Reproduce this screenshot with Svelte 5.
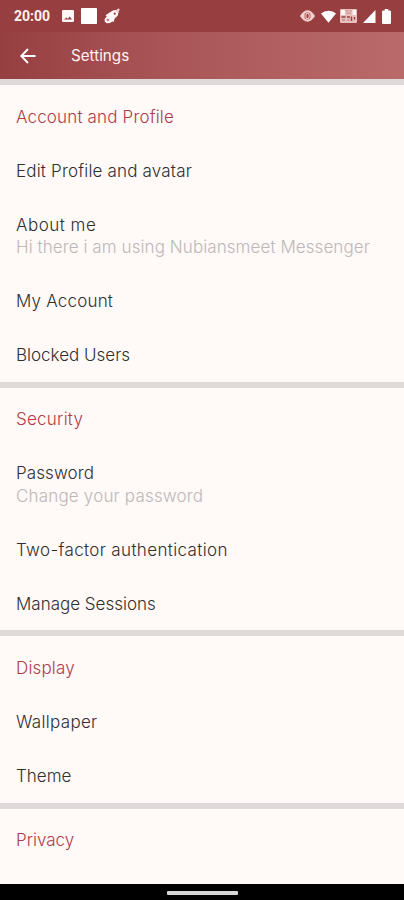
<script lang="ts">
  type Item = { label: string; detail?: string; spacing?: number; detailSpacing?: number };
  type Section = { title: string; spacing?: number; items: Item[] };

  const sections: Section[] = [
    {
      title: "Account and Profile",
      spacing: 0.16,
      items: [
        { label: "Edit Profile and avatar", spacing: 0.18 },
        {
          label: "About me",
          spacing: 0.5,
          detail: "Hi there i am using Nubiansmeet Messenger",
          detailSpacing: 0.08,
        },
        { label: "My Account", spacing: 0.2 },
        { label: "Blocked Users" },
      ],
    },
    {
      title: "Security",
      spacing: 0.25,
      items: [
        {
          label: "Password",
          spacing: 0.1,
          detail: "Change your password",
          detailSpacing: 0.18,
        },
        { label: "Two-factor authentication", spacing: 0.36 },
        { label: "Manage Sessions" },
      ],
    },
    {
      title: "Display",
      spacing: 0.15,
      items: [{ label: "Wallpaper", spacing: 0.3 }, { label: "Theme" }],
    },
    { title: "Privacy", items: [] },
  ];
</script>

<svelte:head>
  <title>Settings</title>
</svelte:head>

<div class="screen">
  <div class="status-bar">
    <span class="clock">20:00</span>
    <div class="left-icons">
      <svg width="12" height="12" viewBox="0 0 12 12">
        <path fill="#fff8f7" fill-rule="evenodd" d="M1.2 0h9.6Q12 0 12 1.2v9.6q0 1.2-1.2 1.2H1.2Q0 12 0 10.8V1.2Q0 0 1.2 0zM2 9.5h8L7.7 6.6 5.8 8.7 4.3 7.4z" />
      </svg>
      <svg width="16" height="16" viewBox="0 0 16 16">
        <rect width="16" height="16" rx="0.8" fill="#fff" />
      </svg>
      <svg width="16" height="16" viewBox="0 0 16 16">
        <path fill="#fff8f7" d="M9.3 2.300L4.500 5.200 1.500 7.200l1.300 1.500L.6 11l.2 2.800 2 1.500 3.200-.2 2.200-1.700 1.400.6 1-3.300 3.200-3.200.6-3.500-1.700-1.900z" />
        <path fill="none" stroke="#f3d0cd" stroke-width="1.300" d="M11.500 3.500L14.800.8M13.500 5L15.300 1" />
        <circle cx="3.900" cy="11.900" r="1.400" fill="#c98583" />
        <circle cx="10.700" cy="5.700" r="1.100" fill="#963e40" />
      </svg>
    </div>
    <div class="right-icons">
      <svg width="15" height="12" viewBox="0 0 15 12">
        <path fill="#f5d0cd" d="M0 6Q3.500.3 7.500.3T15 6q-3.500 5.700-7.500 5.700T0 6z" />
        <rect x="4.600" y="2.600" width="5.800" height="6.800" rx="2.600" fill="#963e40" />
        <ellipse cx="7.500" cy="6" rx="1.700" ry="2.800" fill="none" stroke="#f5d0cd" stroke-width="1.100" />
      </svg>
      <svg class="wifi" width="15" height="13" viewBox="0 0 15 13">
        <path fill="#fff" d="M0 3.500Q3 .8 7.500.8T15 3.500L7.500 12.700z" />
      </svg>
      <svg width="17" height="14" viewBox="0 0 17 14">
        <rect width="17" height="14" rx="1" fill="#e9bfbd" />
        <path fill="#fff4f2" d="M1 1h4v5H1zM12.500 1H16v5h-3.500z" />
        <path stroke="#c78a89" d="M5.500 1.800h2.800M9.300 1.800h2.500M6.500 4.200h4.500" />
        <path stroke="#963e40" stroke-width="1.400" d="M1.500 8h4M7 8h3M11.500 7.500v4.500M14.500 8v2.500" />
        <path stroke="#b96b6b" stroke-width="1.200" d="M2 11h3M7.500 11h2" />
      </svg>
      <svg width="13" height="13" viewBox="0 0 13 13">
        <path fill="#fff" d="M12.500 0v13H0z" />
      </svg>
      <svg width="9" height="15" viewBox="0 0 9 15">
        <path fill="#fff" d="M2.700 0h3.600v1.500h1.500Q9 1.500 9 2.700v11Q9 15 7.800 15H1.200Q0 15 0 13.700v-11Q0 1.500 1.200 1.500h1.500z" />
      </svg>
    </div>
  </div>

  <header class="app-bar">
    <svg width="16" height="16" viewBox="0 0 16 16">
      <path fill="none" stroke="#fff" stroke-width="1.900" d="M15.500 8H1.500M8 1L1.300 8 8 15" />
    </svg>
    <h1>Settings</h1>
  </header>

  <main>
    {#each sections as section}
      <section>
        <h2 style:letter-spacing="{section.spacing ?? 0}px">{section.title}</h2>
        {#each section.items as item}
          <div class="row" class:two-line={item.detail}>
            <span class="label" style:letter-spacing="{item.spacing ?? 0}px">{item.label}</span>
            {#if item.detail}
              <span class="detail" style:letter-spacing="{item.detailSpacing ?? 0}px">{item.detail}</span>
            {/if}
          </div>
        {/each}
      </section>
    {/each}
  </main>

  <div class="nav-bar"><span class="handle"></span></div>
</div>

<style>
  .screen {
    display: flex;
    flex-direction: column;
    width: 404px;
    height: 900px;
    overflow: hidden;
    background: #fff9f8;
    font-family: Inter, Roboto, sans-serif;
  }

  .status-bar {
    display: flex;
    align-items: center;
    flex: none;
    box-sizing: border-box;
    height: 32px;
    padding: 0 13px 0 14px;
    background: #963e40;
  }

  svg {
    display: block;
    flex: none;
  }

  .clock {
    width: 48px;
    padding-top: 1px;
    color: #fff3f1;
    font: 700 14px/31px Roboto, sans-serif;
  }

  .left-icons,
  .right-icons {
    display: flex;
    align-items: center;
  }

  .left-icons {
    gap: 7px;
  }

  .right-icons {
    gap: 6px;
    margin-left: auto;
  }

  .wifi {
    margin-right: -2px;
  }

  .app-bar {
    display: flex;
    align-items: center;
    flex: none;
    box-sizing: border-box;
    height: 47px;
    padding-left: 20px;
    background: linear-gradient(90deg, #963f41 0%, #a95557 40%, #ba6a6b 100%);
  }

  h1 {
    margin: 0 0 0 35px;
    color: #fff3f1;
    font-size: 15.2px;
    font-weight: 400;
    line-height: 24px;
  }

  main {
    flex: 1;
    min-height: 0;
    overflow: hidden;
  }

  section {
    padding-top: 4.6px;
    border-top: 6px solid #dfdad9;
  }

  h2 {
    margin: 0;
    padding-left: 16px;
    color: #ae3d49;
    font-size: 17px;
    font-weight: 300;
    line-height: 54px;
    white-space: nowrap;
  }

  .row {
    display: flex;
    flex-direction: column;
    align-items: flex-start;
    justify-content: center;
    box-sizing: border-box;
    height: 54px;
    padding: 2px 0 0 16px;
    font-size: 17px;
    font-weight: 300;
    line-height: 23px;
    white-space: nowrap;
  }

  .two-line {
    height: 76px;
    padding-top: 1px;
    line-height: 22.5px;
  }

  .label {
    color: #303030;
  }

  .detail {
    color: #bdb8b7;
  }

  .nav-bar {
    display: flex;
    justify-content: center;
    flex: none;
    height: 16px;
    background: #000;
  }

  .handle {
    width: 71px;
    height: 4px;
    margin-top: 7px;
    border-radius: 1px;
    background: #d6d6d6;
  }
</style>
